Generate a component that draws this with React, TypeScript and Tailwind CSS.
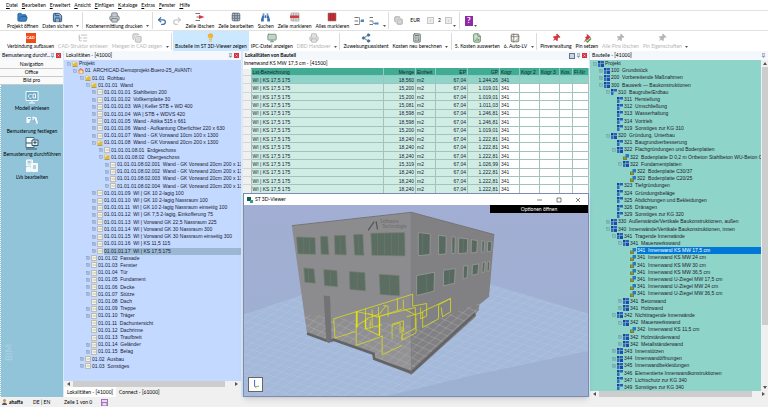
import { ReactNode } from 'react';
import { clsx } from 'clsx';
import {
  Calculator, Copy, FileChartColumn, FolderOpen, Grid3x3, Lightbulb, ListTree,
  Monitor, Pin, Printer, Redo2, Save, Share2, SquareMinus, SquarePlus, Table2, Undo2,
} from 'lucide-react';
import { FaBinoculars, FaThumbtack } from 'react-icons/fa';

const MENU = ['Datei', 'Bearbeiten', 'Erweitert', 'Ansicht', 'Einfügen', 'Kataloge', 'Extras', 'Fenster', 'Hilfe'];

// level, label, icon kind, expander
type Kind = 'folder' | 'house' | 'list' | 'four' | 'three' | 'part';
type Expander = '+' | '-' | '';
type TreeRow = [number, string, Kind, Expander];

const LOCATIONS: TreeRow[] = [
  [0, 'Projekt', 'folder', '-'],
  [1, '01  ARCHICAD-Demoprojekt-Buero-25_AVANTI', 'house', '-'],
  [2, '01.01  Rohbau', 'folder', '-'],
  [3, '01.01.01  Wand', 'folder', '-'],
  [4, '01.01.01.01  Stahlbeton 200', 'list', '+'],
  [4, '01.01.01.02  Vollkernplatte 30', 'list', '+'],
  [4, '01.01.01.03  WA | Keller STB + WD 400', 'list', '+'],
  [4, '01.01.01.04  WA | STB + WDVS 420', 'list', '+'],
  [4, '01.01.01.05  Wand - Attika 515 x 661', 'list', '+'],
  [4, '01.01.01.06  Wand - Aufkantung Oberlichter 220 x 630', 'list', '+'],
  [4, '01.01.01.07  Wand - GK Vorwand 10cm 100 x 1300', 'list', '+'],
  [4, '01.01.01.08  Wand - GK Vorwand 20cm 200 x 1300', 'folder', '-'],
  [5, '01.01.01.08.01  Erdgeschoss', 'list', '+'],
  [5, '01.01.01.08.02  Obergeschoss', 'folder', '-'],
  [6, '01.01.01.08.02.001  Wand - GK Vorwand 20cm 200 x 130', 'list', '+'],
  [6, '01.01.01.08.02.002  Wand - GK Vorwand 20cm 200 x 130', 'list', '+'],
  [6, '01.01.01.08.02.003  Wand - GK Vorwand 20cm 200 x 130', 'list', '+'],
  [6, '01.01.01.08.02.004  Wand - GK Vorwand 20cm 200 x 130', 'list', '+'],
  [4, '01.01.01.09  WI | GK 10 2-lagig 100', 'list', '+'],
  [4, '01.01.01.10  WI | GK 10 2-lagig Nassraum 100', 'list', '+'],
  [4, '01.01.01.11  WI | GK 10 2-lagig Nassraum einseitig 100', 'list', '+'],
  [4, '01.01.01.12  WI | GK 7,5 2-lagig, Einkofferung 75', 'list', '+'],
  [4, '01.01.01.13  WI | Vorwand GK 22,5 Nassraum 225', 'list', '+'],
  [4, '01.01.01.14  WI | Vorwand GK 30 Nassraum 300', 'list', '+'],
  [4, '01.01.01.15  WI | Vorwand GK 30 Nassraum einseitig 300', 'list', '+'],
  [4, '01.01.01.16  WI | KS 11,5 115', 'list', '+'],
  [4, '01.01.01.17  WI | KS 17,5 175', 'list', '+'],
  [3, '01.01.02  Fassade', 'list', '+'],
  [3, '01.01.03  Fenster', 'list', '+'],
  [3, '01.01.04  Tür', 'list', '+'],
  [3, '01.01.05  Fundament', 'list', '+'],
  [3, '01.01.06  Decke', 'list', '+'],
  [3, '01.01.07  Stütze', 'list', '+'],
  [3, '01.01.08  Dach', 'list', ''],
  [3, '01.01.09  Treppe', 'list', '+'],
  [3, '01.01.10  Träger', 'list', '+'],
  [3, '01.01.11  Dachuntersicht', 'list', ''],
  [3, '01.01.12  Dachrinne', 'list', ''],
  [3, '01.01.13  Traufbrett', 'list', ''],
  [3, '01.01.14  Geländer', 'list', '+'],
  [3, '01.01.15  Belag', 'list', '+'],
  [2, '01.02  Ausbau', 'list', '+'],
  [2, '01.03  Sonstiges', 'list', '+'],
];

const ELEMENTS: TreeRow[] = [
  [0, 'Projekt', 'four', '-'],
  [1, '100  Grundstück', 'four', '+'],
  [1, '200  Vorbereitende Maßnahmen', 'four', '+'],
  [1, '300  Bauwerk — Baukonstruktionen', 'four', '-'],
  [2, '310  Baugrube/Erdbau', 'three', '-'],
  [3, '311  Herstellung', 'three', ''],
  [3, '312  Umschließung', 'three', ''],
  [3, '313  Wasserhaltung', 'three', ''],
  [3, '314  Vortrieb', 'three', ''],
  [3, '319  Sonstiges zur KG 310', 'three', ''],
  [2, '320  Gründung, Unterbau', 'four', '-'],
  [3, '321  Baugrundverbesserung', 'three', ''],
  [3, '322  Flachgründungen und Bodenplatten', 'four', '-'],
  [4, '322  Bodenplatte D 0,2 m Ortbeton Stahlbeton WU-Beton C', 'part', ''],
  [4, '322  Fundamentplatten', 'four', '-'],
  [5, '322  Bodenplatte C30/37', 'part', ''],
  [5, '322  Bodenplatte C20/25', 'part', ''],
  [3, '323  Tiefgründungen', 'three', ''],
  [3, '324  Gründungsbeläge', 'three', ''],
  [3, '325  Abdichtungen und Bekleidungen', 'three', ''],
  [3, '326  Dränagen', 'three', ''],
  [3, '329  Sonstiges zur KG 320', 'three', ''],
  [2, '330  Außenwände/Vertikale Baukonstruktionen, außen', 'four', '+'],
  [2, '340  Innenwände/Vertikale Baukonstruktionen, innen', 'four', '-'],
  [3, '341  Tragende Innenwände', 'four', '-'],
  [4, '341  Mauerwerkswand', 'four', '-'],
  [5, '341  Innenwand KS MW 17,5 cm', 'part', ''],
  [5, '341  Innenwand KS MW 24 cm', 'part', ''],
  [5, '341  Innenwand KS MW 30 cm', 'part', ''],
  [5, '341  Innenwand KS MW 36,5 cm', 'part', ''],
  [5, '341  Innenwand U-Ziegel MW 17,5 cm', 'part', ''],
  [5, '341  Innenwand U-Ziegel MW 24 cm', 'part', ''],
  [5, '341  Innenwand U-Ziegel MW 36,5 cm', 'part', ''],
  [4, '341  Betonwand', 'four', '+'],
  [4, '341  Holzwand', 'four', '+'],
  [3, '342  Nichttragende Innenwände', 'four', '-'],
  [4, '342  Mauerwerkswand', 'four', '-'],
  [5, '342  Innenwand KS 11,5 cm', 'part', ''],
  [4, '342  Holzständerwand', 'four', '+'],
  [4, '342  Metallständerwand', 'four', '+'],
  [3, '343  Innenstützen', 'four', '+'],
  [3, '344  Innenwandöffnungen', 'four', '+'],
  [3, '345  Innenwandbekleidungen', 'four', '+'],
  [3, '346  Elementierte Innenwandkonstruktionen', 'three', ''],
  [3, '347  Lichtschutz zur KG 340', 'three', ''],
  [3, '349  Sonstiges zur KG 340', 'three', ''],
];

const QUANTITIES: [string, string][] = [
  ['18,560', '1.244,26'], ['15,200', '1.019,01'], ['15,200', '1.019,01'], ['15,081', '1.011,03'],
  ['18,598', '1.246,81'], ['18,598', '1.246,81'], ['15,200', '1.019,01'], ['18,240', '1.222,81'],
  ['18,240', '1.222,81'], ['18,240', '1.222,81'], ['15,319', '1.026,99'], ['18,240', '1.222,81'],
  ['18,240', '1.222,81'], ['18,240', '1.222,81'],
];

const INDENT = ['pl-[2px]', 'pl-[8px]', 'pl-[15px]', 'pl-[21px]', 'pl-[27px]', 'pl-[34px]', 'pl-[40px]'];

function NodeIcon({ kind }: { kind: Kind }) {
  return (
    <svg viewBox="0 0 12 12" className="size-[6px] shrink-0" aria-hidden="true">
      {kind === 'folder' && (
        <>
          <path d="M1 1h4l1 2h5v8H1z" fill="#e3bb3a" />
          <path d="M2 2h3v3H2z" fill="#fff3b8" />
          <path d="M1 10h10v1H1z" fill="#8a7020" />
        </>
      )}
      {kind === 'house' && (
        <>
          <path d="M1 5l4-4 6 4v6H1z" fill="#e58a5c" />
          <path d="M3 5h6v5H3z" fill="#ffe39a" />
          <path d="M1 5l4-4 6 4" fill="none" stroke="#d63a34" />
        </>
      )}
      {kind === 'list' && (
        <>
          <path d="M1 1h10v10H1z" fill="#f7f3e4" stroke="#9a937c" />
          <path d="M3 6h7" stroke="#8d8872" />
        </>
      )}
      {(kind === 'four' || kind === 'three') && (
        <>
          <path d="M0 0h5v5H0z" fill="#1c3f94" />
          <path d="M6 0h6v5H6z" fill="#2d5cc0" />
          <path d="M0 6h5v6H0z" fill="#2d6bc4" />
          {kind === 'four' && <path d="M6 6h6v6H6z" fill="#1d4ba6" />}
        </>
      )}
      {kind === 'part' && (
        <>
          <path d="M0 5h8v7H0z" fill="#76842c" />
          <path d="M5 0h7v7H5z" fill="#2878c8" />
          <path d="M3 7h2v2H3z" fill="#d8cf62" />
        </>
      )}
    </svg>
  );
}

function Tree({ rows, selected, selectedStyle }: { rows: TreeRow[]; selected: string; selectedStyle: string }) {
  return (
    <ul className="grid min-h-0 min-w-0 flex-1 auto-rows-fr font-['Liberation_Sans',Arial,sans-serif] text-[#1b2030]">
      {rows.map(([level, label, kind, expander], i) => (
        <li key={i} className={clsx('flex min-h-0 min-w-0 items-center gap-px', INDENT[level])}>
          <span className="flex w-[5px] shrink-0 justify-center">
            {expander && (
              <button aria-label={expander === '+' ? 'Aufklappen' : 'Zuklappen'} className="block text-slate-500">
                {expander === '+' ? <SquarePlus size={4} /> : <SquareMinus size={4} />}
              </button>
            )}
          </span>
          <NodeIcon kind={kind} />
          <span
            className={clsx(
              'flex h-[7px] min-w-0 flex-1 items-center overflow-hidden whitespace-pre',
              label === selected && selectedStyle,
            )}
          >
            {label}
          </span>
        </li>
      ))}
    </ul>
  );
}

function PanelTitle({ title, bold, close = true, save }: { title: string; bold?: boolean; close?: boolean; save?: boolean }) {
  return (
    <div className="flex h-[9px] shrink-0 items-center gap-px bg-[#f4f8fc] px-[2px]">
      <h2 className={clsx('min-w-0 flex-1 whitespace-nowrap', bold && 'font-bold')}>{title}</h2>
      {save && <span className="size-[6px] border border-slate-500 bg-slate-300" />}
      <button aria-label="Anheften"><Pin size={5} className="text-slate-600" /></button>
      {close && (
        <button aria-label="Schließen" className="flex size-[5px] items-center justify-center bg-[#d2333c]">
          <svg viewBox="0 0 10 10" className="size-[5px]" stroke="#fff"><path d="M3 3l4 4M7 3l-4 4" /></svg>
        </button>
      )}
    </div>
  );
}

function Tool({ label, icon, disabled, active }: { label: string; icon: ReactNode; disabled?: boolean; active?: boolean }) {
  return (
    <button
      disabled={disabled}
      className={clsx(
        'flex h-full shrink-0 flex-col items-center justify-center whitespace-nowrap px-[2px]',
        disabled ? 'text-[#b5b5b5]' : 'text-black',
        active && 'bg-[#cce8ff]',
      )}
    >
      <span className="flex h-[11px] items-center">{icon}</span>
      <span className="h-[7px] leading-[7px]">{label}</span>
    </button>
  );
}

function More() {
  return (
    <button aria-label="Weitere" className="flex h-full w-[6px] items-end justify-center pb-[3px]">
      <svg viewBox="0 0 4 2" className="h-[2px] w-[3px]"><path d="M0 0h4L2 2z" fill="#222" /></svg>
    </button>
  );
}

function Separator() {
  return <span className="mx-px h-[17px] w-px shrink-0 bg-[#dcdcdc]" />;
}

function RowsIcon({ shift }: { shift?: boolean }) {
  return (
    <svg viewBox="0 0 20 20" className="size-[10px]" fill="none" strokeWidth="2">
      <path d="M1 3h7M1 10h7M1 17h7" stroke="#777" />
      <path d={shift ? 'M8 10v5h4' : 'M8 3h3v7h3M8 17h3v-7'} stroke="#999" />
      <path d={shift ? 'M11 13h8v4h-8z' : 'M14 7h6v5h-6z'} fill="#4a86c8" />
    </svg>
  );
}

function RedRows({ full }: { full?: boolean }) {
  return (
    <svg viewBox="0 0 20 20" className="size-[10px]" fill="none">
      <path d="M2 2h16v16H2z" fill={full ? '#d5383d' : '#eee'} stroke="#777" />
      <path d="M2 6h16M2 10h16M2 14h16M7 2v16M12 2v16" stroke={full ? '#8f1f24' : '#888'} />
      {!full && <path d="M0 7h18v5H0z" fill="#d5383d" />}
    </svg>
  );
}

function Toolbars() {
  return (
    <div className="shrink-0">
      <div className="flex h-[20px] items-center border-t border-[#e2e2e2] pl-[5px]">
        <Tool label="Projekt öffnen" icon={<FolderOpen size={11} fill="#3f82c4" className="text-[#285d93]" />} />
        <Tool label="Daten sichern" icon={<Save size={11} fill="#8ab1d6" className="text-[#2c4a6b]" />} />
        <More />
        <Separator />
        <Tool label="Kostenermittlung drucken" icon={<Printer size={11} fill="#c8ccd0" className="text-[#74808b]" />} />
        <More />
        <Separator />
        <button aria-label="Rückgängig" className="px-[3px]"><Undo2 size={10} strokeWidth={3} className="text-[#3a6fab]" /></button>
        <button aria-label="Wiederholen" disabled className="px-[2px]"><Redo2 size={10} strokeWidth={3} className="text-[#c9c9c9]" /></button>
        <Tool
          label="Zeile löschen"
          icon={
            <svg viewBox="0 0 20 20" className="size-[10px]" fill="none" strokeWidth="2">
              <path d="M1 3h9M1 17h9M3 10h8" stroke="#777" />
              <path d="M8 6l11 4-11 4z" fill="#d5383d" />
            </svg>
          }
        />
        <Tool label="Zeile bearbeiten" icon={<Grid3x3 size={10} fill="#b9c5d2" className="text-[#586675]" />} />
        <Tool label="Suchen" icon={<FaBinoculars size={9} className="text-[#3c72ae]" />} />
        <Tool label="Zeile markieren" icon={<RedRows />} />
        <Tool label="Alles markieren" icon={<RedRows full />} />
        <button aria-label="Einrücken" className="px-[3px]"><RowsIcon /></button>
        <button aria-label="Ausrücken" className="px-[2px]"><RowsIcon shift /></button>
        <More />
        <Separator />
        <button aria-label="Währung" className="px-1"><Copy size={9} fill="#d5d5d5" className="text-[#9b9b9b]" /></button>
        <span className="px-[3px]">EUR</span>
        <button aria-label="Weniger Nachkommastellen" className="mx-1 flex size-[7px] items-center justify-center border border-[#c8c8c8] bg-[#ececec] text-[#999]">‹</button>
        <span>2</span>
        <button aria-label="Mehr Nachkommastellen" className="ml-1 flex size-[7px] items-center justify-center border border-[#c8c8c8] bg-[#ececec] text-[#999]">›</button>
        <More />
        <Separator />
        <button aria-label="Hilfe" className="ml-1 flex h-[10px] w-2 items-center justify-center bg-[#8f2aa5] text-[8px] font-bold text-white">?</button>
        <More />
      </div>
      <div className="flex h-[21px] items-center border-t border-[#e2e2e2] pl-[5px]">
        <Tool
          label="Verbindung aufbauen"
          icon={<span className="flex h-[10px] w-[10px] items-center justify-center bg-[#ee4d1b] text-[4px] font-bold text-white">CAD</span>}
        />
        <Tool disabled label="CAD-Struktur einlesen" icon={<ListTree size={10} />} />
        <Tool disabled label="Mengen in CAD zeigen" icon={<Copy size={10} fill="#ddd" />} />
        <More />
        <Separator />
        <Tool active label="Bauteile im ST 3D-Viewer zeigen" icon={<Lightbulb size={9} fill="#f8b62c" className="text-[#eda21c]" />} />
        <Tool label="IPC-Datei anzeigen" icon={<Monitor size={10} fill="#bcd6c8" className="text-[#74857c]" />} />
        <Tool disabled label="DBD Handover" icon={<Printer size={10} fill="#e3e3e3" />} />
        <More />
        <Separator />
        <Tool label="Zuweisungsassistent" icon={<Share2 size={10} fill="#3d76b8" className="text-[#56708d]" />} />
        <Tool label="Kosten neu berechnen" icon={<Calculator size={10} fill="#c5cbc8" className="text-[#68736d]" />} />
        <More />
        <Separator />
        <Tool label="5. Kosten auswerten" icon={<FileChartColumn size={10} fill="#cfe0d0" className="text-[#55825a]" />} />
        <Tool label="6. Auto-LV" icon={<Table2 size={10} fill="#c8c8c0" className="text-[#77776c]" />} />
        <More />
        <Separator />
        <Tool label="Pinverwaltung" icon={<FaThumbtack size={8} className="rotate-45 text-[#d4343b]" />} />
        <Tool
          label="Pin setzen"
          icon={
            <svg viewBox="0 0 20 20" className="size-[10px]">
              <path d="M9 1l9 8-3 1-3 4-2-1-7 6 5-8-2-2 4-3z" fill="#d4343b" />
              <path d="M8 15l3 3 7-7" fill="none" stroke="#46a546" strokeWidth="3" />
            </svg>
          }
        />
        <Tool disabled label="Alle Pins löschen" icon={<FaThumbtack size={8} className="rotate-45" />} />
        <Tool disabled label="Pin Eigenschaften" icon={<FaThumbtack size={8} className="rotate-45" />} />
        <More />
      </div>
    </div>
  );
}

function SideIcon({ name }: { name: string }) {
  return (
    <svg viewBox="0 0 28 28" className="size-[14px]" fill="none" strokeWidth="2" aria-hidden="true">
      {name === 'model' && (
        <>
          <path d="M2 3h24v18H2z" fill="#6fa9c8" stroke="#f4fafc" />
          <path d="M8 26h12M14 21v5M16 8h5v8h-5zM13 9a4 4 0 1 0 0 7" stroke="#f4fafc" />
        </>
      )}
      {name === 'define' && (
        <>
          <path d="M3 8h9v4l-4 8H3zM15 7l8 2 3 12h-5l-3-7h-3z" fill="#f4fafc" />
          <path d="M6 11h5M18 11l3 9" stroke="#7c9fb2" />
        </>
      )}
      {name === 'apply' && (
        <>
          <path d="M2 3h16v20H2z" fill="#f4fafc" stroke="#496c80" />
          <path d="M14 8h12v11H14z" fill="#dce8ee" stroke="#35576b" />
          <path d="M2 14h12M20 10v6M17 13h6M2 26h22" stroke="#35576b" />
        </>
      )}
      {name === 'edit' && (
        <>
          <path d="M3 2h12v12H3z" fill="#d5e7ef" stroke="#f4fafc" />
          <path d="M13 9h12v16H13zM3 17h8v8H3z" fill="#f4fafc" stroke="#f4fafc" />
          <path d="M16 14h6M16 18h6M6 6h5" stroke="#7caac0" />
        </>
      )}
    </svg>
  );
}

function Sidebar() {
  const items = [
    ['model', 'Modell einlesen'],
    ['define', 'Bemusterung festlegen'],
    ['apply', 'Bemusterung durchführen'],
    ['edit', 'LVs bearbeiten'],
  ];
  return (
    <aside className="flex w-[63px] shrink-0 flex-col">
      <PanelTitle title="Bemusterung durchf..." />
      <div className="flex shrink-0 flex-col bg-[#fafafa] pt-px">
        {['Navigation', 'Office', 'Bild pro'].map((label) => (
          <button key={label} className="h-[8px] border-b border-[#c9c9c9] text-center leading-[7px]">
            {label}
          </button>
        ))}
      </div>
      <nav className="flex flex-1 flex-col items-center border-l border-dotted border-white bg-[#91c4d9] pt-1">
        {items.map(([name, label]) => (
          <button key={name} className="flex h-[23px] shrink-0 flex-col items-center whitespace-nowrap">
            <span className="flex h-[15px] items-center"><SideIcon name={name} /></span>
            <span className="leading-[8px]">{label}</span>
          </button>
        ))}
        <span className="mt-auto mb-9 ml-1 rotate-180 self-start text-[9px] font-bold text-[#a5cfe0] [writing-mode:vertical-rl]">
          BIM
        </span>
      </nav>
    </aside>
  );
}

function HorizontalScroll() {
  return (
    <div className="flex h-[6px] shrink-0 items-center gap-[3px] bg-[#f0f0f0] px-[3px] text-[#555]">
      <svg viewBox="0 0 3 4" className="h-1 w-[3px]"><path d="M3 0v4L0 2z" fill="currentColor" /></svg>
      <span className="h-[6px] flex-1 bg-[#cdcdcd]" />
      <span className="w-1" />
      <svg viewBox="0 0 3 4" className="h-1 w-[3px]"><path d="M0 0v4l3-2z" fill="currentColor" /></svg>
    </div>
  );
}

function QuantityTable() {
  const head = 'border border-[#8fcdbf] border-t-[#3fac93] px-px font-normal whitespace-nowrap';
  const cell = 'border border-[#a3c2ba] px-px';
  return (
    <table className="h-[126px] w-full table-fixed border-collapse font-['Liberation_Sans',Arial,sans-serif] leading-[6px] text-[#1b2030]">
      <colgroup>
        <col className="w-[8px]" />
        <col />
        <col className="w-[32px]" />
        <col className="w-[20px]" />
        <col className="w-[32px]" />
        <col className="w-[32px]" />
        <col className="w-[20px]" />
        <col className="w-[20px]" />
        <col className="w-[20px]" />
        <col className="w-[13px]" />
        <col className="w-[16px]" />
      </colgroup>
      <thead>
        <tr className="bg-[#3fac93] text-left">
          <th className="bg-[#f0f0f0]" />
          <th className={head}>Lst-Bezeichnung</th>
          <th className={clsx(head, 'text-right')}>Menge</th>
          <th className={head}>Einheit</th>
          <th className={clsx(head, 'text-right')}>EP</th>
          <th className={clsx(head, 'text-right')}>GP</th>
          <th className={head}>Kogr</th>
          <th className={head}>Kogr 2</th>
          <th className={head}>Kogr 3</th>
          <th className={head}>Kos.</th>
          <th className={head}>Fl-Nr</th>
        </tr>
      </thead>
      <tbody>
        {QUANTITIES.map(([menge, gp], i) => {
          const tint = i === 0 ? 'bg-[#8fd4c8]' : 'bg-[#cfece5]';
          const plain = i === 0 ? 'bg-[#8fd4c8]' : 'bg-white';
          return (
            <tr key={i}>
              <td className="border-y border-[#d5d5d5] bg-[#f0f0f0]" />
              <td className={clsx(cell, tint)}>WI | KS 17,5 175</td>
              <td className={clsx(cell, tint, 'text-right')}>{menge}</td>
              <td className={clsx(cell, tint)}>m2</td>
              <td className={clsx(cell, tint, 'text-right')}>67,04</td>
              <td className={clsx(cell, tint, 'text-right')}>{gp}</td>
              <td className={clsx(cell, plain)}>341</td>
              <td className={clsx(cell, plain)} />
              <td className={clsx(cell, plain)} />
              <td className={clsx(cell, plain)} />
              <td className={clsx(cell, plain)} />
            </tr>
          );
        })}
      </tbody>
    </table>
  );
}

const LEFT_WINDOWS = [
  '168,142 224,144 226,194 172,193', '240,140 262,140 266,195 242,194', '282,138 316,137 318,196 284,195',
  '340,135 368,134 371,197 343,196', '392,131 494,129 495,199 395,197',
  '190,235 221,238 225,281 193,278', '250,240 290,243 292,292 252,288', '327,246 374,249 376,304 329,300',
  '417,254 477,258 479,319 420,315',
];
const RIGHT_WINDOWS = [
  '535,129 571,133 570,195 535,198', '596,137 619,140 618,193 596,195', '636,141 646,143 645,191 636,192',
  '657,145 684,148 682,190 656,192', '695,150 713,153 711,188 694,190', '727,153 735,155 733,187 726,188',
  '744,155 756,157 754,185 743,186',
  '530,258 584,248 582,305 530,318', '611,242 646,237 644,281 611,289', '671,230 684,228 682,264 670,268',
  '698,226 717,223 714,253 697,257', '728,219 736,217 734,247 727,249', '743,217 750,215 749,243 742,245',
];

function Building() {
  return (
    <svg viewBox="10 46 1036 574" preserveAspectRatio="none" className="absolute inset-0 size-full" role="img" aria-label="3D-Modell">
      <defs>
        <linearGradient id="sky" x1="0" y1="0" x2="0" y2="1">
          <stop offset="0" stopColor="#a2aed3" />
          <stop offset="1" stopColor="#9db1d3" />
        </linearGradient>
        <linearGradient id="fadeLeft" x1="0" y1="0" x2="0" y2="1">
          <stop offset="0.6" stopColor="#8c8c8e" />
          <stop offset="1" stopColor="#959597" />
        </linearGradient>
        <pattern id="floor" width="26" height="26" patternUnits="userSpaceOnUse" patternTransform="matrix(1 0.28 -0.85 0.55 0 0)">
          <path d="M0 0h26M0 0v26" stroke="#bac9e3" strokeWidth="2" fill="none" />
        </pattern>
        <pattern id="base" width="20" height="20" patternUnits="userSpaceOnUse" patternTransform="matrix(1 0.45 -0.85 0.75 0 0)">
          <path d="M0 0h20M0 0v20" stroke="#b3b3b5" strokeWidth="2" fill="none" />
        </pattern>
      </defs>
      <path d="M10 46h1036v574H10z" fill="url(#sky)" />
      <path d="M10 375L180 318 480 240 760 286 1046 372V485L700 558 440 620H10z" fill="#a5b9da" />
      <path d="M10 375L180 318 480 240 760 286 1046 372V485L700 558 440 620H10z" fill="url(#floor)" />
      <path d="M154 108L514 68V556L402 512 400 494 280 455 267 459 200 434z" fill="url(#fadeLeft)" />
      <path d="M514 68L764 135 748 322 719 345 717 362 708 372V382L514 556z" fill="#818183" />
      <path d="M193 374L514 410V556L402 512 400 494 280 455 267 459 200 434z" fill="url(#base)" />
      <path d="M514 420L719 340 717 362 708 382 514 556z" fill="url(#base)" />
      <path d="M200 432l65 24 15-5 120 42 2 15 112 41 192-176" fill="none" stroke="#636467" strokeWidth="8" />
      <path d="M154 108L514 68l250 67" fill="none" stroke="#757577" strokeWidth="3" />
      <path d="M514 68v488" stroke="#777779" strokeWidth="2" />
      <path d="M250 318l19 2 5 136-16 2z" fill="#737376" />
      {LEFT_WINDOWS.map((points) => (
        <polygon key={points} points={points} fill="#5c6d62" stroke="#778078" strokeWidth="2" />
      ))}
      {RIGHT_WINDOWS.map((points) => (
        <polygon key={points} points={points} fill="#586a5f" stroke="#a1a5a2" strokeWidth="2" />
      ))}
      <g stroke="#697a6e" strokeWidth="2">
        <path d="M190 143v50M207 143v50M300 138v57M356 135v61M412 131v66M433 130v67M454 130v67M475 130v68" />
        <path d="M205 237v42M270 242v48M351 248v53M448 256v60M548 131v66M560 255v56M628 240v44M670 147v44" />
      </g>
      <path d="M384 122l18-26M408 95l4 24" stroke="#58585b" strokeWidth="4" />
      <text x="420" y="101" fontSize="14" fill="#6c6c6e">Software</text>
      <text x="426" y="116" fontSize="14" fill="#6c6c6e">Technologie</text>
      <g fill="none" stroke="#d8d822" strokeWidth="2.5">
        <path d="M280 388L518 314V350M280 388l4 58 62-20M348 366l70 15 68-22M348 366v102l80-28M345 410l40-22" />
        <path d="M376 356v62l42 20V380M376 388l42-14 20-26M415 352v30M472 326v38M490 330v28l40 20M430 348l14 2v32" />
        <path d="M418 380l108-26v62l-40 22v14l42-22v-46M426 438v58l60-28M456 448v-44l34-10v34M456 408l24-8v30" />
        <path d="M518 350l42-8v38l-18 8v-34M548 366v48l48-26v-42l36-19v40l-24 15-4-28M548 366l84-39M500 382l50-14" />
        <path d="M376 418l50-12M384 372l30 12M390 390v28M396 360v52M486 452v-40" />
      </g>
      <path d="M350 366v48M418 380v58M376 390v28" stroke="#eee800" strokeWidth="4" />
    </svg>
  );
}

function ViewerWindow() {
  return (
    <section className="absolute inset-x-0 top-[142px] bottom-0 flex flex-col border border-[#7d8bb0] bg-white shadow-md" aria-label="ST 3D-Viewer">
      <header className="flex h-[11px] shrink-0 items-center px-[3px]">
        <svg viewBox="0 0 12 12" className="mr-[2px] size-[6px]"><path d="M0 0h8v8H0z" fill="#0c5f59" /><path d="M6 6h6v6H6z" fill="#2aa08c" /></svg>
        <h2 className="flex-1">ST 3D-Viewer</h2>
        <div className="flex gap-[13px] pr-1 text-black">
          {['M0 6h10', 'M2 2h8v8H2z', 'M2 2l8 8M10 2l-8 8'].map((d, i) => (
            <button key={d} aria-label={['Minimieren', 'Maximieren', 'Schließen'][i]}>
              <svg viewBox="0 0 12 12" className="size-[6px]" fill="none" stroke="currentColor"><path d={d} /></svg>
            </button>
          ))}
        </div>
      </header>
      <div className="relative flex flex-1 flex-col items-end justify-between overflow-hidden">
        <Building />
        <button className="relative h-2 w-[98px] bg-black text-center leading-[7px] text-white">Optionen öffnen</button>
        <div className="relative mb-[4px] ml-1 flex size-[15px] items-center justify-center self-start border border-[#666] bg-white">
          <svg viewBox="0 0 12 12" className="size-[11px]" fill="none">
            <path d="M5 1v7" stroke="#3157d8" /><path d="M5 8h5" stroke="#65b848" /><path d="M5 8l2 2" stroke="#d66" />
          </svg>
        </div>
      </div>
    </section>
  );
}

export default function App() {
  return (
    <div className="flex h-screen flex-col overflow-hidden bg-white font-[Lato,'Liberation_Sans',sans-serif] text-[5px] leading-[7px] text-black">
      <nav className="flex h-[10px] shrink-0 items-center gap-1 pl-[6px]">
        {MENU.map((item) => (
          <button key={item} className="first-letter:underline">{item}</button>
        ))}
      </nav>
      <Toolbars />
      <main className="flex min-h-0 flex-1 gap-px bg-[#d8e9f8]">
        <Sidebar />
        <section className="flex w-[177px] shrink-0 flex-col">
          <PanelTitle title="Lokalitäten - [41000]" />
          <div className="flex min-h-0 flex-1 flex-col bg-[#c3d9ff] pb-[11px]">
            <Tree rows={LOCATIONS} selected="01.01.01.17  WI | KS 17,5 175" selectedStyle="bg-[#9bb8d3]" />
          </div>
          <HorizontalScroll />
          <div className="flex h-[10px] shrink-0 items-center bg-[#f0f0f0]">
            <button className="h-full bg-white px-[3px]">Lokalitäten - [41000]</button>
            <button className="px-[3px]">Connect - [61000]</button>
          </div>
        </section>
        <section className="relative ml-px flex min-w-0 flex-1 flex-col bg-white">
          <PanelTitle title="Lokalitäten von Bauteil" bold save />
          <p className="h-2 shrink-0 pl-px">Innenwand KS MW 17,5 cm - [41500]</p>
          <QuantityTable />
          <ViewerWindow />
        </section>
        <section className="flex w-[178px] shrink-0 flex-col">
          <PanelTitle title="Bauteile - [41000]" close={false} />
          <div className="flex min-h-0 flex-1 bg-[#8fd4c8]">
            <Tree rows={ELEMENTS} selected="341  Innenwand KS MW 17,5 cm" selectedStyle="bg-[#0078d7] text-white" />
            <div className="flex w-[7px] shrink-0 flex-col items-center justify-between bg-[#f0f0f0] py-[2px]">
              <svg viewBox="0 0 4 3" className="h-[3px] w-1"><path d="M0 3h4L2 0z" fill="#555" /></svg>
              <span className="mt-[2px] h-[258px] w-[6px] bg-[#cdcdcd]" />
              <span className="flex-1" />
              <svg viewBox="0 0 4 3" className="h-[3px] w-1"><path d="M0 0h4L2 3z" fill="#555" /></svg>
            </div>
          </div>
          <HorizontalScroll />
        </section>
      </main>
      <footer className="flex h-[10px] shrink-0 items-center bg-[#f0f0f0] pl-[2px]">
        <svg viewBox="0 0 10 12" className="mr-[2px] h-[6px] w-[5px]"><circle cx="5" cy="3" r="3" fill="#c98b4b" /><path d="M0 12c0-7 10-7 10 0z" fill="#555" /></svg>
        <span className="w-[24px] font-bold">ahaffa</span>
        <span className="w-[31px]">DE | EN</span>
        <span className="w-[37px]">Zeile 1 von 0</span>
        <svg viewBox="0 0 14 14" className="size-[7px]">
          <path d="M0 0h14v14H0z" fill="#a273b8" />
          <path d="M2 2h10v4H2zM3 8h8v5H3z" fill="#ead9f2" />
        </svg>
      </footer>
    </div>
  );
}
